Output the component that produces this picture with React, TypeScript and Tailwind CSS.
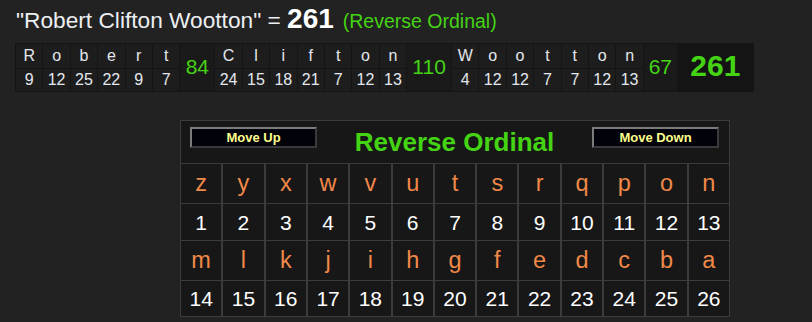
import React from "react";

const words: { letters: [string, number][]; sum: number; w: string }[] = [
  {
    letters: [["R", 9], ["o", 12], ["b", 25], ["e", 22], ["r", 9], ["t", 7]],
    sum: 84,
    w: "w-[34px]",
  },
  {
    letters: [["C", 24], ["l", 15], ["i", 18], ["f", 21], ["t", 7], ["o", 12], ["n", 13]],
    sum: 110,
    w: "w-[44px]",
  },
  {
    letters: [["W", 4], ["o", 12], ["o", 12], ["t", 7], ["t", 7], ["o", 12], ["n", 13]],
    sum: 67,
    w: "w-[33px]",
  },
];

const row1 = "zyxwvutsrqpon".split("");
const row3 = "mlkjihgfedcba".split("");
const nums1 = Array.from({ length: 13 }, (_, i) => i + 1);
const nums2 = Array.from({ length: 13 }, (_, i) => i + 14);

function Btn({ label }: { label: string }) {
  return (
    <div className="w-[127px] h-[21px] box-border border-2 border-t-[#7c7c7c] border-l-[#7c7c7c] border-b-[#3a3a3a] border-r-[#3a3a3a] bg-[#02020a] flex items-center justify-center text-[13px] font-bold leading-none text-[#ffff8a]">
      {label}
    </div>
  );
}

export default function App() {
  return (
    <div
      className="w-[812px] h-[322px] bg-[#222222] overflow-hidden"
      style={{ fontFamily: '"Liberation Sans", Arial, sans-serif' }}
    >
      {/* Title */}
      <div className="h-[43px] box-border pt-[5px] pl-[16px] flex items-baseline whitespace-pre">
        <span className="text-[22.7px] leading-none text-[#eceff2]">"Robert Clifton Wootton" = </span>
        <span className="text-[28px] leading-none font-bold text-white">261</span>
        <span className="text-[19.5px] leading-none text-[#44d414] ml-[9px]">(Reverse Ordinal)</span>
      </div>

      {/* Breakdown table */}
      <div className="ml-[15px] w-fit bg-[#151515] p-px flex gap-px">
        {words.map((wd, wi) => (
          <React.Fragment key={wi}>
            <div className="flex flex-col gap-px">
              <div className="flex gap-px">
                {wd.letters.map(([l], i) => (
                  <div
                    key={i}
                    className="w-[26.4px] h-[24px] bg-[#1d1d1d] flex items-center justify-center text-[16px] leading-none text-[#e4e8ee]"
                  >
                    {l}
                  </div>
                ))}
              </div>
              <div className="flex gap-px">
                {wd.letters.map(([, n], i) => (
                  <div
                    key={i}
                    className="w-[26.4px] h-[22px] bg-[#1d1d1d] flex items-center justify-center text-[16px] leading-none text-[#e4e8ee]"
                  >
                    {n}
                  </div>
                ))}
              </div>
            </div>
            <div
              className={`${wd.w} bg-[#1a1a1a] flex items-center justify-center pb-[2px] text-[21px] leading-none text-[#44d414]`}
            >
              {wd.sum}
            </div>
          </React.Fragment>
        ))}
        <div className="w-[75px] bg-[#141414] flex items-center justify-center pb-[3px] text-[30px] font-bold leading-none text-[#44d414]">
          261
        </div>
      </div>

      {/* Cipher chart */}
      <div className="ml-[180px] mt-[28px] w-[550px] bg-[#3c3c3c] p-px flex flex-col gap-px">
        <div className="h-[42px] bg-[#171717] flex justify-between items-start pt-[6px] pl-[9px] pr-[10px]">
          <Btn label="Move Up" />
          <div className="self-center text-[26px] font-bold leading-none text-[#44d414] pb-[7px]">
            Reverse Ordinal
          </div>
          <Btn label="Move Down" />
        </div>
        <div className="grid grid-cols-[repeat(13,minmax(0,1fr))] gap-x-[2px] h-[39px]">
          {row1.map((c) => (
            <div key={c} className="bg-[#171717] flex items-center justify-center text-[23.5px] leading-none text-[#f08848]">
              {c}
            </div>
          ))}
        </div>
        <div className="grid grid-cols-[repeat(13,minmax(0,1fr))] gap-x-[2px] h-[36px]">
          {nums1.map((n) => (
            <div key={n} className="bg-[#171717] flex items-center justify-center text-[21px] leading-none text-white">
              {n}
            </div>
          ))}
        </div>
        <div className="grid grid-cols-[repeat(13,minmax(0,1fr))] gap-x-[2px] h-[39px]">
          {row3.map((c) => (
            <div key={c} className="bg-[#171717] flex items-center justify-center text-[23.5px] leading-none text-[#f08848]">
              {c}
            </div>
          ))}
        </div>
        <div className="grid grid-cols-[repeat(13,minmax(0,1fr))] gap-x-[2px] h-[35px]">
          {nums2.map((n) => (
            <div key={n} className="bg-[#171717] flex items-center justify-center text-[21px] leading-none text-white">
              {n}
            </div>
          ))}
        </div>
      </div>
    </div>
  );
}
